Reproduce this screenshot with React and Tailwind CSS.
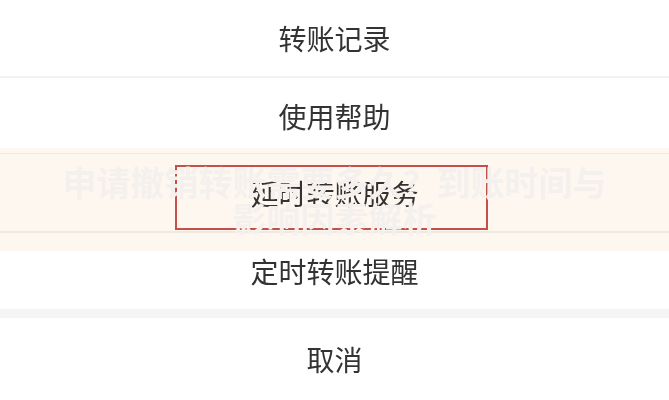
export default function App() {
  const font = { fontFamily: '"Noto Sans CJK SC", "Noto Sans", sans-serif' };
  return (
    <div className="relative w-[669px] h-[400px] overflow-hidden bg-white text-[#333333]" style={font}>
      <div className="flex flex-col">
        <div className="h-[76px] flex items-center justify-center text-[28px] leading-none">转账记录</div>
        <div className="h-[2px] bg-[#f2f2f2]" />
        <div className="h-[75px] flex items-center justify-center text-[28px] leading-none">使用帮助</div>
        <div className="h-[1px] bg-[#f2f2f2]" />
        <div className="h-[77px] flex items-center justify-center text-[28px] leading-none">延时转账服务</div>
        <div className="h-[2px] bg-[#f0f0f0]" />
        <div className="h-[76px] flex items-center justify-center text-[28px] leading-none">定时转账提醒</div>
        <div className="h-[9px] bg-[#f5f5f5]" />
        <div className="h-[82px] flex items-center justify-center text-[28px] leading-none">取消</div>
      </div>

      <div className="absolute left-0 right-0 top-[148px] h-[103px] bg-[#fdf7f0] mix-blend-multiply" />
      <div className="absolute left-[175px] top-[165px] w-[313px] h-[65px] border-2 border-[#c4504a]" />
      <div className="absolute left-0 right-0 top-[148px] h-[103px] flex flex-col items-center justify-center">
        <div className="text-[34px] leading-[36px] font-bold text-[#f3f0ed] text-center">
          申请撤销转账需要多久？到账时间与
        </div>
        <div className="text-[34px] leading-[36px] font-bold text-[#f3f0ed] text-center">
          影响因素解析
        </div>
      </div>
    </div>
  );
}
